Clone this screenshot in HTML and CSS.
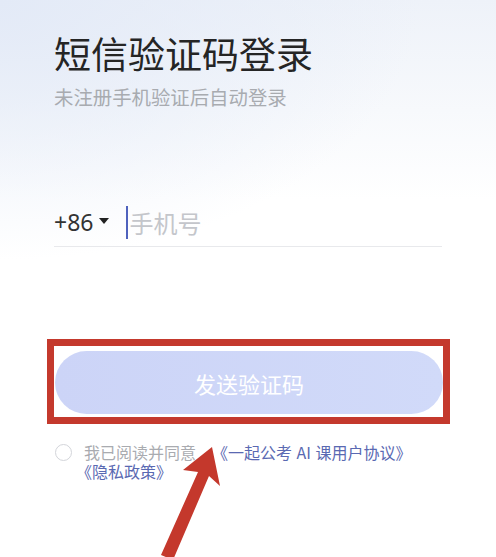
FILE: index.html
```html
<!DOCTYPE html>
<html lang="zh-CN">
<head>
    <meta charset="UTF-8">
    <meta name="viewport" content="width=device-width, initial-scale=1.0">
    <title>短信验证码登录</title>
    <link rel="stylesheet" href="styles.css">
</head>
<body>
    <div class="page">
        <h1 class="title">短信验证码登录</h1>
        <p class="subtitle">未注册手机验证后自动登录</p>

        <!-- Phone input -->
        <div class="phone-row">
            <span class="code">+86</span>
            <span class="caret"></span>
            <span class="cursor"></span>
            <span class="placeholder">手机号</span>
        </div>

        <!-- Send button, highlighted -->
        <div class="highlight">
            <button class="send-button">发送验证码</button>
        </div>

        <!-- Agreement -->
        <div class="agree">
            <span class="radio"></span>
            <p class="agree-text">我已阅读并同意<span class="link first">《一起公考 AI 课用户协议》</span><span class="link">《隐私政策》</span></p>
        </div>
    </div>

    <svg class="arrow" width="496" height="557" viewBox="0 0 496 557">
        <polygon points="212,447 220,486 209,476 173,560 161,555 198,472 183,470" fill="#c4382c"/>
    </svg>
</body>
</html>
```

FILE: styles.css
```css
body {
    margin: 0;
    height: 557px;
    overflow: hidden;
    position: relative;
    font-family: "Noto Sans CJK SC", "Noto Sans", sans-serif;
    background:
        radial-gradient(ellipse 420px 260px at 0 0, #e3eaf7, rgba(255, 255, 255, 0)),
        linear-gradient(180deg, #eef2f9 0, #f7f9fc 110px, #ffffff 200px);
}
.page {
    padding: 31px 54px 0 54px;
}
.title {
    margin: 0;
    font-size: 37px;
    font-weight: 400;
    line-height: 44px;
    color: #252525;
}
.subtitle {
    margin: 9px 0 0 0;
    font-size: 19.4px;
    line-height: 26px;
    color: #a8abb0;
}
.phone-row {
    margin-top: 88px;
    height: 48px;
    display: flex;
    align-items: center;
    border-bottom: 1px solid #e8e9ec;
}
.code {
    font-size: 23px;
    color: #333;
    font-family: "Noto Sans", sans-serif;
}
.caret {
    width: 0;
    height: 0;
    margin: 0 0 3px 6px;
    border-left: 5px solid transparent;
    border-right: 5px solid transparent;
    border-top: 6px solid #222;
}
.cursor {
    width: 2px;
    height: 33px;
    margin-left: 17px;
    background-color: #4f62bd;
}
.placeholder {
    margin-left: 1px;
    font-size: 24px;
    color: #c4c6cb;
}
.highlight {
    margin: 92px 0 0 -7px;
    width: 388px;
    padding: 5px 0 3px 1px;
    border: 7px solid #c4392d;
}
.send-button {
    display: block;
    width: 388px;
    height: 63px;
    border: none;
    border-radius: 32px;
    background: linear-gradient(90deg, #ccd4f7, #d1daf9);
    color: #ffffff;
    font-family: inherit;
    font-size: 22px;
}
.agree {
    margin-top: 19px;
    display: flex;
    align-items: flex-start;
}
.radio {
    flex: none;
    width: 15px;
    height: 15px;
    margin: 1px 0 0 1px;
    border: 1.5px solid #d3d5da;
    border-radius: 50%;
}
.agree-text {
    margin: 0 0 0 12px;
    font-size: 16px;
    line-height: 19px;
    color: #a9abb0;
}
.link {
    color: #5a69b2;
    white-space: nowrap;
    word-spacing: 1px;
}
.link.first {
    margin-left: 16px;
}
.arrow {
    position: absolute;
    left: 0;
    top: 0;
}
```
